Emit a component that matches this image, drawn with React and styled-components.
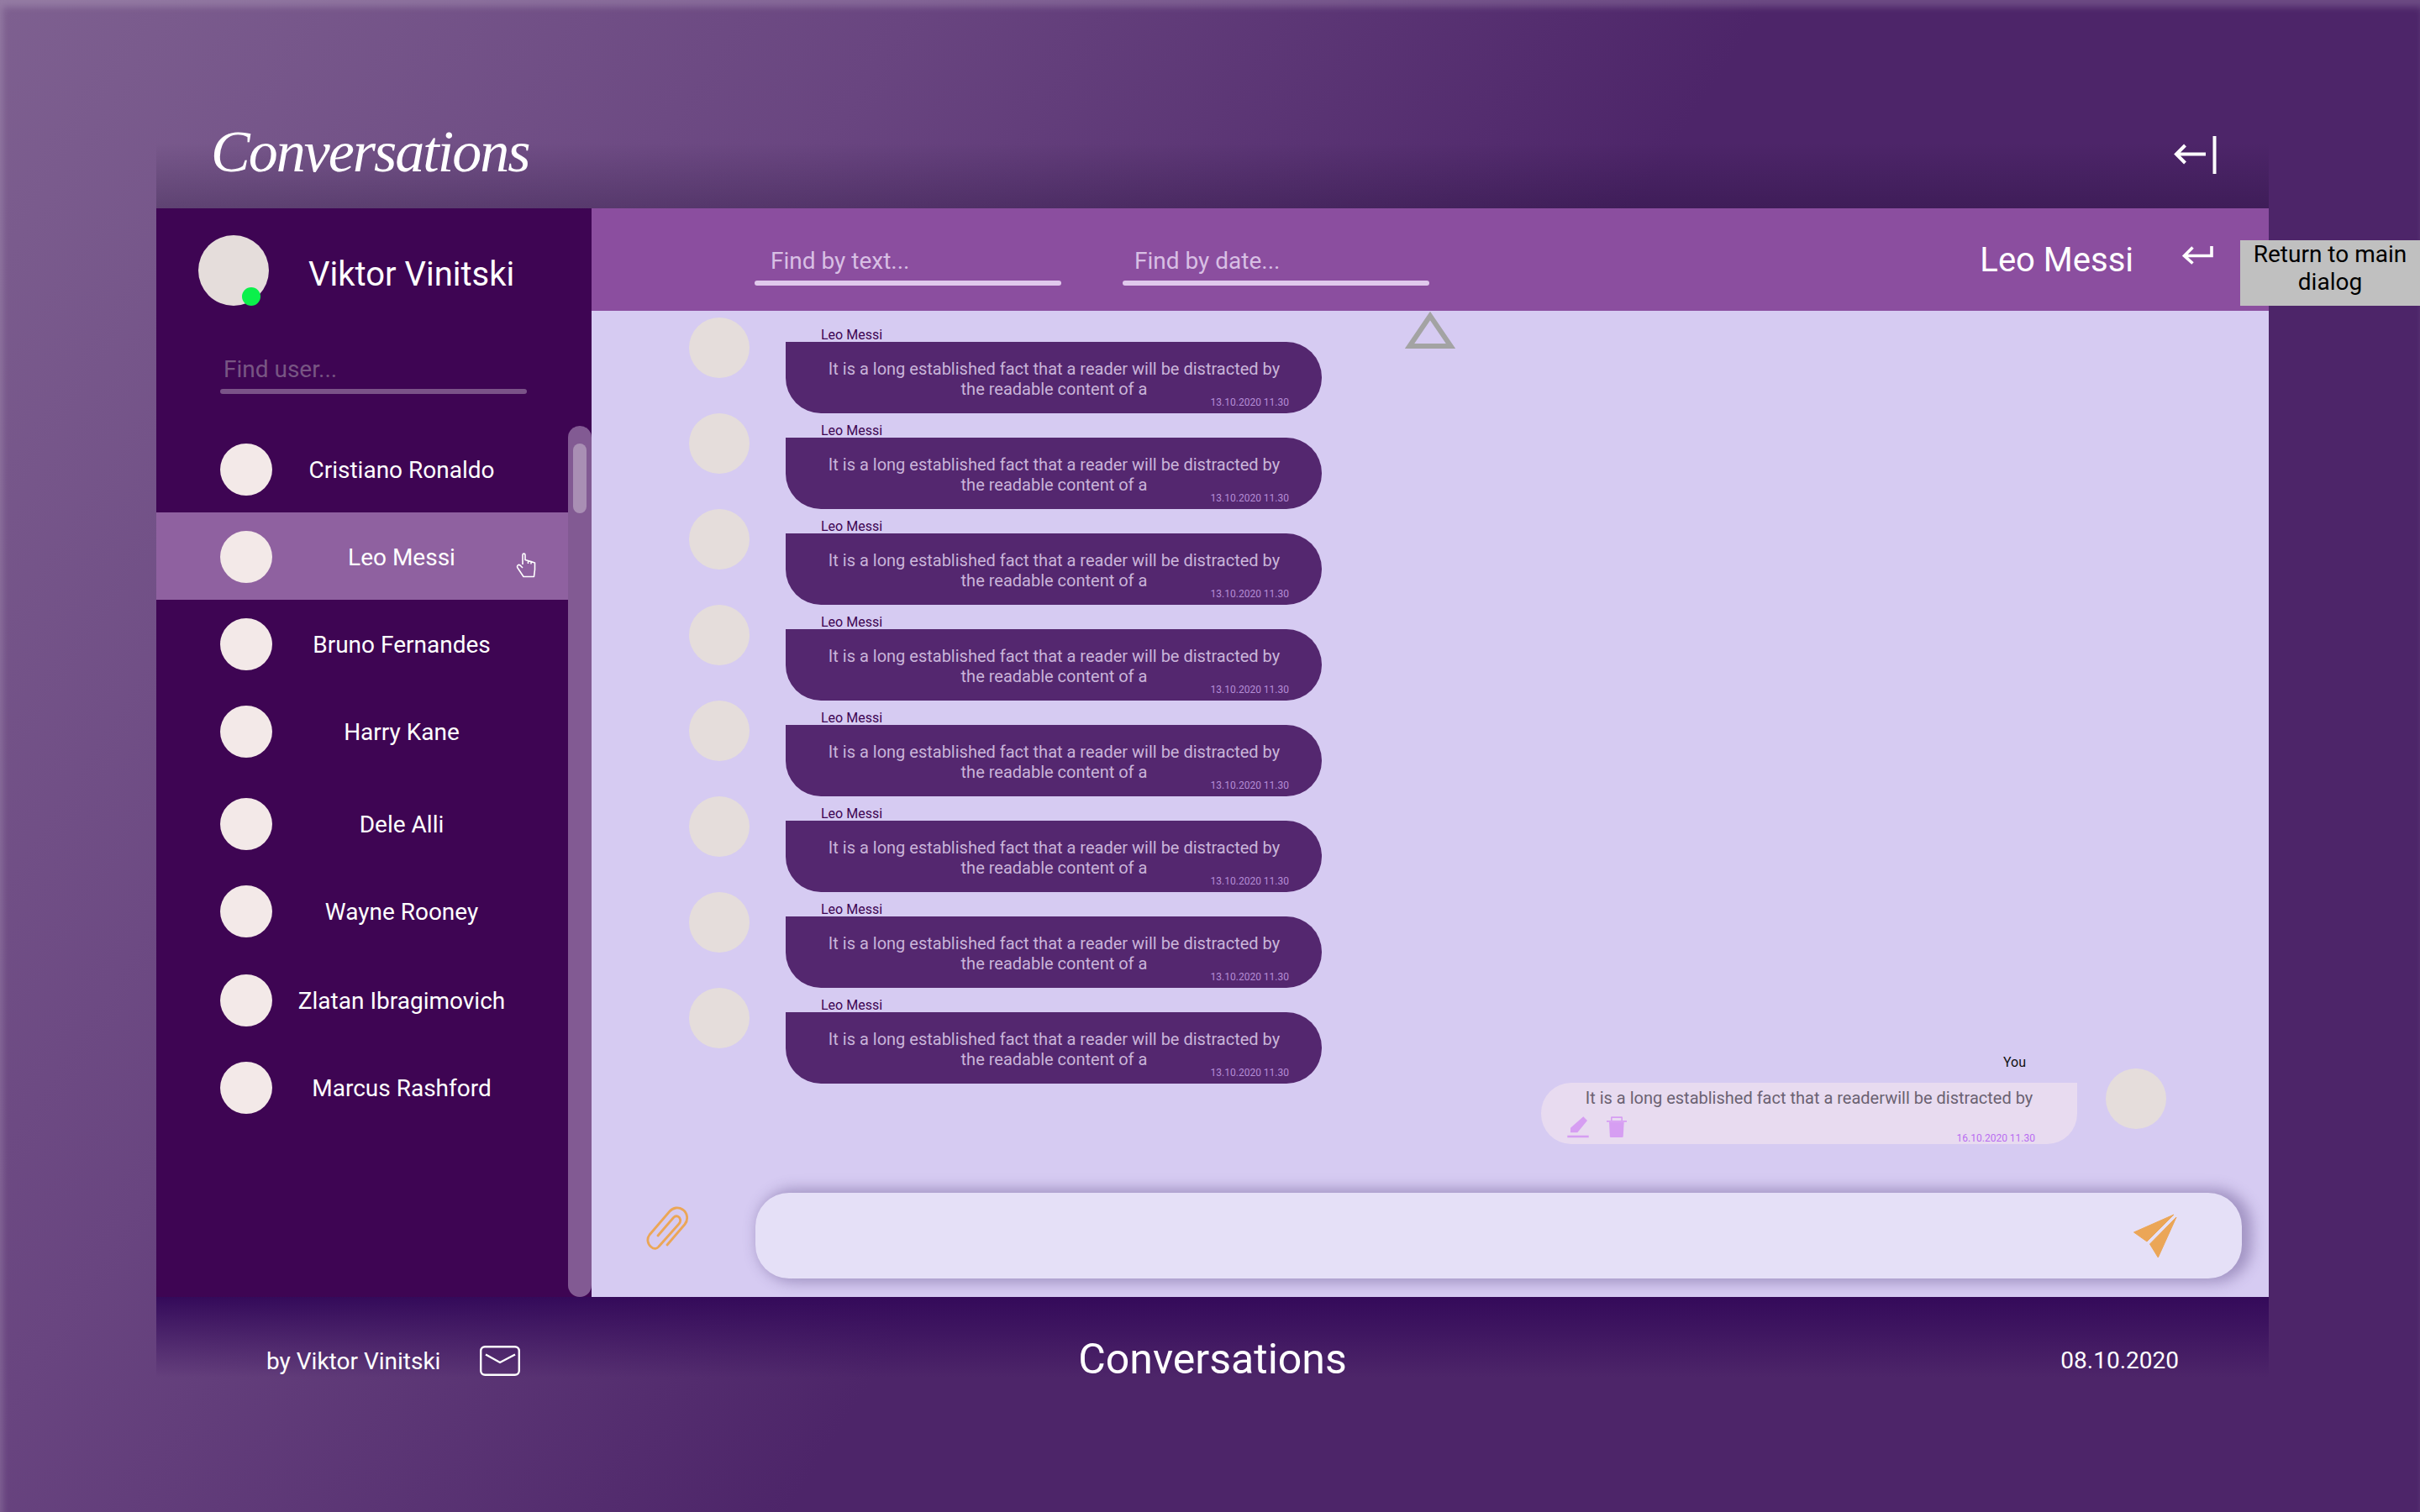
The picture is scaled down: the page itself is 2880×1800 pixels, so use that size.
import React from "react";
import styled, { createGlobalStyle } from "styled-components";

const GlobalStyle = createGlobalStyle`
    * {
        box-sizing: border-box;
    }
    body {
        margin: 0;
        overflow: hidden;
        font-family: Roboto, "Liberation Sans", sans-serif;
    }
`

const users = [
    { name: "Cristiano Ronaldo" },
    { name: "Leo Messi", active: true },
    { name: "Bruno Fernandes" },
    { name: "Harry Kane" },
    { name: "Dele Alli", shift: 6 },
    { name: "Wayne Rooney" },
    { name: "Zlatan Ibragimovich", shift: 2 },
    { name: "Marcus Rashford" },
];

const incoming = Array.from({ length: 8 }, (_, i) => i);

function App() {
    return (
        <Page>
            <GlobalStyle />
            <Header>
                <Logo>Conversations</Logo>
                <svg width="51" height="45" viewBox="0 0 51 45" fill="none" stroke="#fff" strokeWidth="4">
                    <path d="M38 21.5H4M13.5 11L3 21.5 13.5 32" />
                    <path d="M48.5 0V45" />
                </svg>
            </Header>

            <Main>
                <Sidebar>
                    <Profile>
                        <ProfileAvatar>
                            <OnlineDot />
                        </ProfileAvatar>
                        <ProfileName>Viktor Vinitski</ProfileName>
                    </Profile>
                    <UserSearch>
                        <SearchInput $inset={4} $muted placeholder="Find user..." />
                        <SearchLine $muted />
                    </UserSearch>
                    <UserArea>
                        <UserList>
                            {users.map((user) => (
                                <UserRow key={user.name} $active={user.active} $shift={user.shift}>
                                    <UserAvatar />
                                    <UserName>{user.name}</UserName>
                                    {user.active && (
                                        <HandCursor width="24" height="30" viewBox="0 0 24 30" fill="none" stroke="#fff" strokeWidth="1.6" strokeLinejoin="round">
                                            <path d="M8 14V2.8C8 .6 11 .6 11 2.8V8.5L14.5 9.5V13M14.5 9.5L18 10.5V13.5M18 10.5L22.5 12V20L21.5 28.5H9L2 18C.6 15.5 3 13.5 5 15L8 18" />
                                        </HandCursor>
                                    )}
                                </UserRow>
                            ))}
                        </UserList>
                        <ScrollTrack>
                            <ScrollThumb />
                        </ScrollTrack>
                    </UserArea>
                </Sidebar>

                <Chat>
                    <ChatHeader>
                        <HeaderSearch>
                            <SearchInput $inset={19} placeholder="Find by text..." />
                            <SearchLine />
                        </HeaderSearch>
                        <HeaderSearch>
                            <SearchInput $inset={14} placeholder="Find by date..." />
                            <SearchLine />
                        </HeaderSearch>
                        <ChatTitle>Leo Messi</ChatTitle>
                        <svg width="37" height="22" viewBox="0 0 37 22" fill="none" stroke="#fff" strokeWidth="3.6">
                            <path d="M35 0V11.5H4M12.5 1.5L2.5 11.5 12.5 20.5" />
                        </svg>
                        <Tooltip>Return to main dialog</Tooltip>
                    </ChatHeader>

                    <Thread>
                        <ScrollUp width="60" height="45" viewBox="0 0 60 45" fill="none" stroke="#a3a3a3" strokeWidth="6">
                            <path d="M30 6L5.5 42H54.5Z" />
                        </ScrollUp>
                        {incoming.map((i) => (
                            <IncomingRow key={i}>
                                <MessageAvatar />
                                <div>
                                    <SenderName>Leo Messi</SenderName>
                                    <IncomingBubble>
                                        <BubbleText>It is a long established fact that a reader will be distracted by the readable content of a</BubbleText>
                                        <IncomingDate>13.10.2020 11.30</IncomingDate>
                                    </IncomingBubble>
                                </div>
                            </IncomingRow>
                        ))}
                        <OutgoingRow>
                            <div>
                                <YouLabel>You</YouLabel>
                                <OutgoingBubble>
                                    <OutgoingText>It is a long established fact that a readerwill be distracted by</OutgoingText>
                                    <BubbleFooter>
                                        <BubbleActions>
                                            <svg width="26" height="26" viewBox="15 9 26 26" fill="#d69ef2">
                                                <path d="M34.3 9.3L39 14 27.3 28.3H19V22.7Z" />
                                                <rect x="15.3" y="31.7" width="25.4" height="2.6" />
                                            </svg>
                                            <svg width="24" height="26" viewBox="62 9 24 26" fill="#d69ef2">
                                                <path d="M67 14V10.5C67 9.8 67.6 9.3 68.3 9.3H79.7C80.4 9.3 81 9.8 81 10.5V14H86V15.8H62V14ZM68.6 14H79.4V11H68.6Z" fillRule="evenodd" />
                                                <path d="M65 15.8H82.7L81.7 33C81.6 33.6 81.2 34 80.6 34H67C66.4 34 66 33.6 65.9 33Z" />
                                            </svg>
                                        </BubbleActions>
                                        <OutgoingDate>16.10.2020 11.30</OutgoingDate>
                                    </BubbleFooter>
                                </OutgoingBubble>
                            </div>
                            <OutgoingAvatar />
                        </OutgoingRow>
                    </Thread>

                    <Composer>
                        <svg width="51" height="52" viewBox="0 0 51 52" fill="none" stroke="#eba657" strokeWidth="2.8" strokeLinecap="round">
                            <path d="M25 46L46 21.5C50.5 16 49 7.5 43.5 4 38.5.5 32 1.5 28 6L4 34C.5 38.5 1.5 45 6 48.5 9.5 51.5 13 50.5 15 48L39 21C42 17.5 40.5 13.5 38 12.3 36 11.3 34 12 32.5 13.5L14 35" />
                        </svg>
                        <MessageField>
                            <svg width="52" height="54" viewBox="20 16 52 54" fill="#eba657" stroke="#eba657" strokeWidth="1" strokeLinejoin="round">
                                <path d="M68 17L20.5 38 36 49Z" />
                                <path d="M71 20L39.5 52 49.3 68Z" />
                            </svg>
                        </MessageField>
                    </Composer>
                </Chat>
            </Main>

            <Footer>
                <FooterAuthor>
                    <FooterText>by Viktor Vinitski</FooterText>
                    <svg width="48" height="36" viewBox="0 0 48 36" fill="none" stroke="#fff" strokeWidth="2.4">
                        <rect x="1.2" y="1.2" width="45.6" height="33.6" rx="5" />
                        <path d="M7 10.5L24 20 42 10.5" />
                    </svg>
                </FooterAuthor>
                <FooterTitle>Conversations</FooterTitle>
                <FooterDate>08.10.2020</FooterDate>
            </Footer>
        </Page>
    );
}

const Page = styled.div`
    width: 2880px;
    height: 1800px;
    padding: 0 180px 0 186px;
    display: flex;
    flex-direction: column;
    background: linear-gradient(123deg, #7e6090 0%, #694580 27%, #4d2569 52%);
    box-shadow: inset 3px 8px 8px rgba(255, 255, 255, 0.18);
`
const Header = styled.header`
    height: 248px;
    flex-shrink: 0;
    padding: 146px 62px 0 65px;
    display: flex;
    justify-content: space-between;
    align-items: flex-start;
    background: linear-gradient(to bottom, rgba(20, 5, 40, 0) 170px, rgba(20, 5, 40, 0.25) 248px);

    svg {
        margin-top: 16px;
    }
`
const Logo = styled.h1`
    margin: 0;
    font-family: "Liberation Serif", serif;
    font-style: italic;
    font-weight: 400;
    font-size: 70px;
    line-height: 70px;
    letter-spacing: -2px;
    color: #fff;
`
const Main = styled.main`
    height: 1296px;
    flex-shrink: 0;
    display: flex;
`
const Sidebar = styled.aside`
    width: 518px;
    flex-shrink: 0;
    padding-top: 32px;
    display: flex;
    flex-direction: column;
    background: #3e0553;
`
const Profile = styled.div`
    display: flex;
    align-items: center;
    gap: 47px;
    padding-left: 50px;
`
const ProfileAvatar = styled.div`
    position: relative;
    width: 84px;
    height: 84px;
    border-radius: 50%;
    background: #e5dddb;
`
const OnlineDot = styled.span`
    position: absolute;
    left: 52px;
    bottom: 0;
    width: 22px;
    height: 22px;
    border-radius: 50%;
    background: #0bf04b;
`
const ProfileName = styled.div`
    margin-top: 8px;
    font-size: 40px;
    color: #fff;
`
const UserSearch = styled.div`
    width: 365px;
    margin: 55px 0 0 76px;
`
const HeaderSearch = styled.div`
    width: 365px;
`
const SearchInput = styled.input`
    display: block;
    width: 100%;
    height: 40px;
    padding: 0 0 0 ${(props) => props.$inset}px;
    border: none;
    outline: none;
    background: transparent;
    font-family: inherit;
    font-size: 28px;
    color: #fff;

    &::placeholder {
        color: ${(props) => (props.$muted ? "#785583" : "#d8bfe4")};
        opacity: 1;
    }
`
const SearchLine = styled.div`
    height: 6px;
    margin-top: 4px;
    border-radius: 3px;
    background: ${(props) => (props.$muted ? "#7a5388" : "#e0c8ec")};
`
const UserArea = styled.div`
    flex: 1;
    min-height: 0;
    margin-top: 38px;
    display: flex;
`
const UserList = styled.div`
    width: 490px;
    margin-top: -1px;
`
const UserRow = styled.div`
    position: relative;
    height: 104px;
    margin-top: ${(props) => props.$shift || 0}px;
    padding: 22px 44px 20px 76px;
    display: flex;
    align-items: center;
    background: ${(props) => (props.$active ? "#8f61a0" : "transparent")};
`
const UserAvatar = styled.div`
    width: 62px;
    height: 62px;
    flex-shrink: 0;
    border-radius: 50%;
    background: #f3e9e8;
`
const UserName = styled.div`
    flex: 1;
    text-align: center;
    font-size: 28px;
    color: #fff;
`
const HandCursor = styled.svg`
    position: absolute;
    left: 428px;
    top: 48px;
`
const ScrollTrack = styled.div`
    width: 28px;
    padding: 21px 6px 0;
    border-radius: 14px;
    background: #825a93;
`
const ScrollThumb = styled.div`
    height: 83px;
    border-radius: 8px;
    background: #a98fb4;
`
const Chat = styled.section`
    flex: 1;
    min-width: 0;
    display: flex;
    flex-direction: column;
    background: #d6cbf2;
`
const ChatHeader = styled.div`
    position: relative;
    height: 122px;
    flex-shrink: 0;
    padding: 42px 66px 0 194px;
    display: flex;
    align-items: flex-start;
    gap: 73px;
    background: #8b4e9f;

    > svg {
        margin: 3px 0 0 -15px;
    }
`
const ChatTitle = styled.div`
    margin-left: auto;
    font-size: 40px;
    line-height: 40px;
    color: #fff;
`
const Tooltip = styled.div`
    position: absolute;
    left: 1962px;
    top: 38px;
    width: 214px;
    height: 78px;
    padding: 0 8px;
    background: #c0c0c0;
    text-align: center;
    font-size: 28px;
    line-height: 33px;
    color: #000;
`
const Thread = styled.div`
    position: relative;
    flex: 1;
    min-height: 0;
    padding-top: 8px;
`
const ScrollUp = styled.svg`
    position: absolute;
    left: 968px;
    top: 0;
`
const IncomingRow = styled.div`
    height: 114px;
    padding-left: 116px;
    display: flex;
    gap: 43px;
`
const MessageAvatar = styled.div`
    width: 72px;
    height: 72px;
    flex-shrink: 0;
    border-radius: 50%;
    background: #e5dddb;
`
const SenderName = styled.div`
    height: 17px;
    margin-top: 12px;
    padding-left: 42px;
    font-size: 16px;
    line-height: 18px;
    color: #3e0553;
`
const IncomingBubble = styled.div`
    width: 638px;
    height: 85px;
    padding: 20px 39px 0 40px;
    display: flex;
    flex-direction: column;
    border-radius: 0 42px 42px 42px;
    background: #54276f;
`
const BubbleText = styled.div`
    text-align: center;
    font-size: 20px;
    line-height: 24px;
    color: #c9b4d9;
`
const IncomingDate = styled.div`
    align-self: flex-end;
    margin-top: -3px;
    font-size: 12px;
    line-height: 14px;
    color: #b48dd6;
`
const OutgoingRow = styled.div`
    margin-top: -34px;
    padding-right: 122px;
    display: flex;
    justify-content: flex-end;
    gap: 34px;
`
const YouLabel = styled.div`
    height: 18px;
    margin-bottom: 15px;
    padding-right: 61px;
    text-align: right;
    font-size: 16px;
    line-height: 18px;
    color: #111;
`
const OutgoingBubble = styled.div`
    width: 638px;
    height: 73px;
    padding: 6px 50px 0 31px;
    border-radius: 36px 0 36px 36px;
    background: #e8dbf0;
`
const OutgoingText = styled(BubbleText)`
    margin-right: -19px;
    color: #6b6272;
`
const BubbleFooter = styled.div`
    margin-top: 10px;
    display: flex;
    justify-content: space-between;
    align-items: flex-end;
`
const BubbleActions = styled.div`
    display: flex;
    gap: 21px;
`
const OutgoingDate = styled.div`
    margin-bottom: -7px;
    font-size: 12px;
    line-height: 14px;
    color: #b96cf0;
`
const OutgoingAvatar = styled(MessageAvatar)`
    margin-top: 16px;
`
const Composer = styled.div`
    flex-shrink: 0;
    padding: 0 32px 22px 65px;
    display: flex;
    align-items: center;
    gap: 79px;

    > svg {
        margin-bottom: 18px;
    }
`
const MessageField = styled.div`
    flex: 1;
    height: 102px;
    padding-right: 77px;
    display: flex;
    justify-content: flex-end;
    align-items: center;
    border-radius: 40px;
    background: #e5e0f7;
    box-shadow: 7px 0 16px 5px rgba(80, 60, 120, 0.38);

    svg {
        margin-top: 2px;
    }
`
const Footer = styled.footer`
    flex: 1;
    padding: 48px 107px 0 107px;
    display: grid;
    grid-template-columns: 1fr auto 1fr;
    align-items: start;
    background: linear-gradient(to bottom, #340a5a, rgba(52, 10, 90, 0) 96px);
`
const FooterAuthor = styled.div`
    height: 52px;
    margin-top: 2px;
    padding-left: 24px;
    display: flex;
    align-items: center;
    gap: 47px;
`
const FooterText = styled.span`
    font-size: 28px;
    color: #fff;
`
const FooterTitle = styled.div`
    font-size: 50px;
    line-height: 52px;
    color: #fff;
`
const FooterDate = styled.div`
    line-height: 56px;
    text-align: right;
    font-size: 28px;
    color: #fff;
`

export default App;
